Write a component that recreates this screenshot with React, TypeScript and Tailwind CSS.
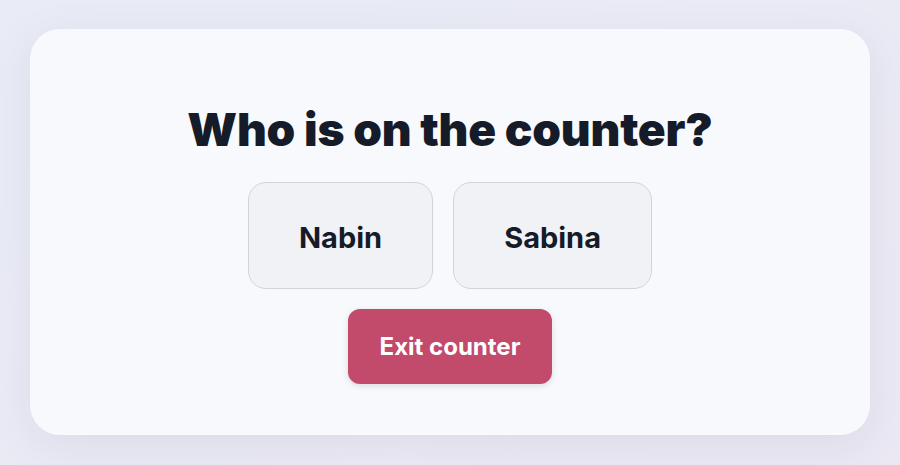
export default function App() {
  const people = ['Nabin', 'Sabina'];

  return (
    <div className="flex h-screen w-full bg-gradient-to-br from-[#e8ecf5] to-[#ebe8f3] p-[30px] pt-[29px]" style={{ fontFamily: 'Inter, "Noto Sans", sans-serif' }}>
      <div className="flex flex-1 flex-col items-center rounded-[30px] bg-[#f8f9fc] pt-[74px] shadow-[0_10px_40px_rgba(120,120,160,0.12)]">
        <h1 className="text-[46px] font-black leading-[52px] tracking-[-0.005em] text-[#151b29]">
          Who is on the counter?
        </h1>

        <div className="mt-[27px] flex gap-[20px]">
          {people.map((name) => (
            <button
              key={name}
              className="h-[107px] rounded-[18px] border border-[#d3d4da] bg-[#f1f2f5] px-[50px] pt-[4px] text-[29px] font-bold text-[#151b29]"
            >
              {name}
            </button>
          ))}
        </div>

        <button className="mt-[20px] h-[75px] w-[204px] rounded-[12px] bg-[#c24a6b] text-[24px] font-bold text-white shadow-[0_2px_6px_rgba(0,0,0,0.12)]">
          Exit counter
        </button>
      </div>
    </div>
  );
}
